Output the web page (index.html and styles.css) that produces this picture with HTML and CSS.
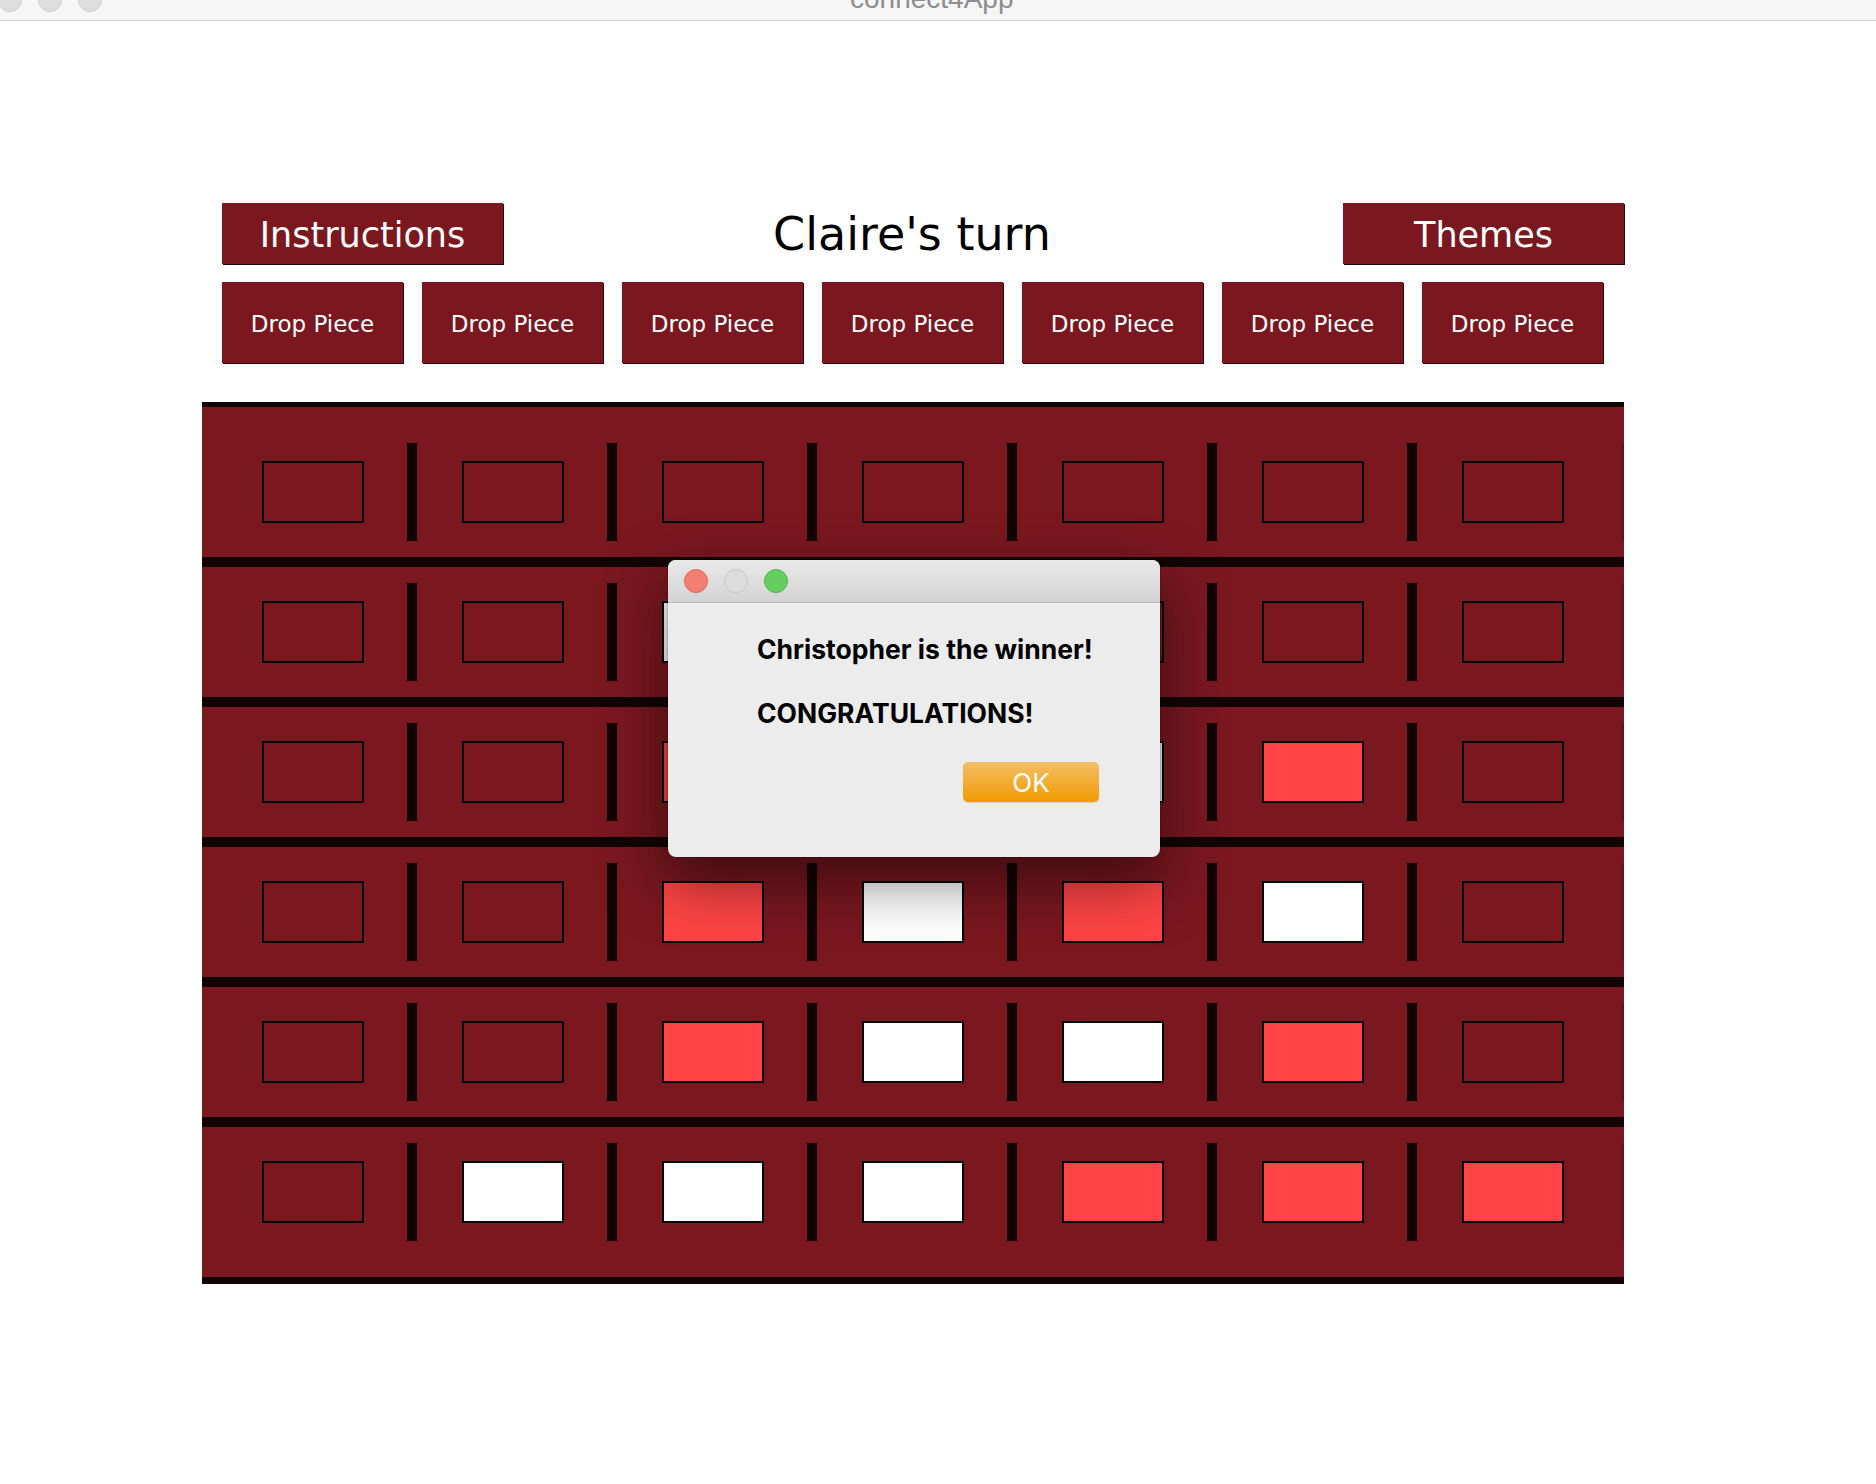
FILE: index.html
```html
<!DOCTYPE html>
<html lang="en">
<head>
<meta charset="utf-8">
<title>connect4App</title>
<link rel="stylesheet" href="styles.css">
</head>
<body>
<div class="window">
  <header class="titlebar">
    <div class="lights">
      <span class="light"></span><span class="light"></span><span class="light"></span>
    </div>
    <span class="win-title">connect4App</span>
  </header>

  <main class="app">
    <div class="top-row">
      <button class="btn btn-big">Instructions</button>
      <h1 class="turn">Claire's turn</h1>
      <button class="btn btn-big">Themes</button>
    </div>

    <div class="drop-row">
      <button class="btn btn-drop">Drop Piece</button>
      <button class="btn btn-drop">Drop Piece</button>
      <button class="btn btn-drop">Drop Piece</button>
      <button class="btn btn-drop">Drop Piece</button>
      <button class="btn btn-drop">Drop Piece</button>
      <button class="btn btn-drop">Drop Piece</button>
      <button class="btn btn-drop">Drop Piece</button>
    </div>

    <div class="board">
      <div class="row">
        <span class="cell"></span><span class="div"></span>
        <span class="cell"></span><span class="div"></span>
        <span class="cell"></span><span class="div"></span>
        <span class="cell"></span><span class="div"></span>
        <span class="cell"></span><span class="div"></span>
        <span class="cell"></span><span class="div"></span>
        <span class="cell"></span><span class="div-edge"></span>
      </div>
      <div class="row">
        <span class="cell"></span><span class="div"></span>
        <span class="cell"></span><span class="div"></span>
        <span class="cell white"></span><span class="div"></span>
        <span class="cell"></span><span class="div"></span>
        <span class="cell"></span><span class="div"></span>
        <span class="cell"></span><span class="div"></span>
        <span class="cell"></span><span class="div-edge"></span>
      </div>
      <div class="row">
        <span class="cell"></span><span class="div"></span>
        <span class="cell"></span><span class="div"></span>
        <span class="cell red"></span><span class="div"></span>
        <span class="cell"></span><span class="div"></span>
        <span class="cell white"></span><span class="div"></span>
        <span class="cell red"></span><span class="div"></span>
        <span class="cell"></span><span class="div-edge"></span>
      </div>
      <div class="row">
        <span class="cell"></span><span class="div"></span>
        <span class="cell"></span><span class="div"></span>
        <span class="cell red"></span><span class="div"></span>
        <span class="cell white"></span><span class="div"></span>
        <span class="cell red"></span><span class="div"></span>
        <span class="cell white"></span><span class="div"></span>
        <span class="cell"></span><span class="div-edge"></span>
      </div>
      <div class="row">
        <span class="cell"></span><span class="div"></span>
        <span class="cell"></span><span class="div"></span>
        <span class="cell red"></span><span class="div"></span>
        <span class="cell white"></span><span class="div"></span>
        <span class="cell white"></span><span class="div"></span>
        <span class="cell red"></span><span class="div"></span>
        <span class="cell"></span><span class="div-edge"></span>
      </div>
      <div class="row">
        <span class="cell"></span><span class="div"></span>
        <span class="cell white"></span><span class="div"></span>
        <span class="cell white"></span><span class="div"></span>
        <span class="cell white"></span><span class="div"></span>
        <span class="cell red"></span><span class="div"></span>
        <span class="cell red"></span><span class="div"></span>
        <span class="cell red"></span><span class="div-edge"></span>
      </div>
    </div>
  </main>

  <div class="dialog">
    <div class="dialog-bar">
      <span class="dl dl-red"></span><span class="dl dl-gray"></span><span class="dl dl-green"></span>
    </div>
    <div class="dialog-body">
      <p class="msg">Christopher is the winner!</p>
      <p class="msg msg2">CONGRATULATIONS!</p>
      <div class="dialog-actions">
        <button class="ok">OK</button>
      </div>
    </div>
  </div>
</div>
</body>
</html>
```

FILE: styles.css
```css
* { box-sizing: border-box; }

html, body {
  margin: 0;
  padding: 0;
  background: #ffffff;
}

body {
  width: 1876px;
  height: 1484px;
  overflow: hidden;
  font-family: "DejaVu Sans", "Liberation Sans", sans-serif;
}

.window {
  position: relative;
  width: 1876px;
  height: 1484px;
}

/* window title bar */
.titlebar {
  height: 21px;
  background: #f6f6f6;
  border-bottom: 1px solid #d6d6d6;
  display: flex;
  align-items: flex-start;
  overflow: hidden;
}

.lights {
  display: flex;
  gap: 16px;
  margin-left: -2px;
  margin-top: -12px;
}

.light {
  width: 24px;
  height: 24px;
  border-radius: 50%;
  background: #dedede;
  border: 1px solid #cdcdcd;
}

.win-title {
  margin-left: 748px;
  margin-top: -14px;
  font-family: "Liberation Sans", Arial, sans-serif;
  font-size: 28px;
  line-height: 26px;
  color: #8d8d8d;
  white-space: nowrap;
}

/* main app */
.app {
  margin-left: 202px;
  width: 1422px;
  padding-top: 181px;
}

.btn {
  border: none;
  margin: 0;
  background: #7a171f;
  color: #ffffff;
  font-family: "DejaVu Sans", sans-serif;
  box-shadow: 1px 1px 0 #2e0609;
  padding: 0;
  cursor: default;
}

.top-row {
  display: flex;
  align-items: center;
  justify-content: space-between;
  padding-left: 20px;
  height: 62px;
}

.btn-big {
  width: 281px;
  height: 61px;
  font-size: 35px;
  padding-top: 4px;
}

.turn {
  margin: 2px 22px 0 0;
  font-family: "DejaVu Sans", sans-serif;
  font-weight: normal;
  font-size: 46px;
  color: #000000;
}

.drop-row {
  display: flex;
  gap: 19px;
  padding-left: 20px;
  margin-top: 18px;
}

.btn-drop {
  width: 181px;
  height: 81px;
  font-size: 23px;
  padding-top: 3px;
}

/* board */
.board {
  margin-top: 39px;
  background: #7a171f;
  border-top: 5px solid #120404;
  border-bottom: 7px solid #120404;
  padding: 20px 0;
  display: flex;
  flex-direction: column;
}

.row {
  height: 130px;
  display: flex;
  align-items: center;
  padding-left: 60px;
}

.row + .row {
  height: 140px;
  border-top: 10px solid #120404;
}

.cell {
  width: 102px;
  height: 62px;
  border: 2px solid #000000;
  background: #7a171f;
  flex: none;
}

.cell.red { background: #fe4444; }
.cell.white { background: #ffffff; }

.div {
  width: 10px;
  height: 98px;
  margin: 0 45px 0 43px;
  background: #120404;
  flex: none;
}

.div-edge {
  width: 3px;
  height: 98px;
  margin-left: 57px;
  background: #68131a;
  flex: none;
}

/* dialog overlay */
.dialog {
  position: absolute;
  left: 668px;
  top: 560px;
  width: 492px;
  height: 297px;
  border-radius: 8px;
  background: #ececec;
  overflow: hidden;
  box-shadow: 0 24px 60px rgba(0, 0, 0, 0.5), 0 0 0 1px rgba(0, 0, 0, 0.12);
  font-family: "Inter", "Liberation Sans", sans-serif;
}

.dialog-bar {
  height: 43px;
  background: linear-gradient(#e9e9e9, #d3d3d3);
  border-bottom: 1px solid #b8b8b8;
  display: flex;
  align-items: center;
  gap: 16px;
  padding-left: 16px;
}

.dl {
  width: 24px;
  height: 24px;
  border-radius: 50%;
}

.dl-red { background: #f47e70; border: 1px solid #e0675b; }
.dl-gray { background: #dcdcdc; border: 1px solid #c6c6c6; }
.dl-green { background: #64ce5f; border: 1px solid #52b44d; }

.dialog-body {
  padding: 26px 0 0 89px;
}

.msg {
  margin: 0;
  font-weight: 700;
  font-size: 26.5px;
  line-height: 40px;
  color: #000000;
}

.msg2 {
  margin-top: 24px;
}

.dialog-actions {
  display: flex;
  padding-left: 206px;
  margin-top: 29px;
}

.ok {
  width: 136px;
  height: 40px;
  border: none;
  border-radius: 5px;
  background: linear-gradient(#f3bf66, #f09a00);
  box-shadow: 0 1px 1px rgba(0, 0, 0, 0.12);
  color: #ffffff;
  font-family: "Inter", "Liberation Sans", sans-serif;
  font-size: 26px;
  padding: 0;
}
```
